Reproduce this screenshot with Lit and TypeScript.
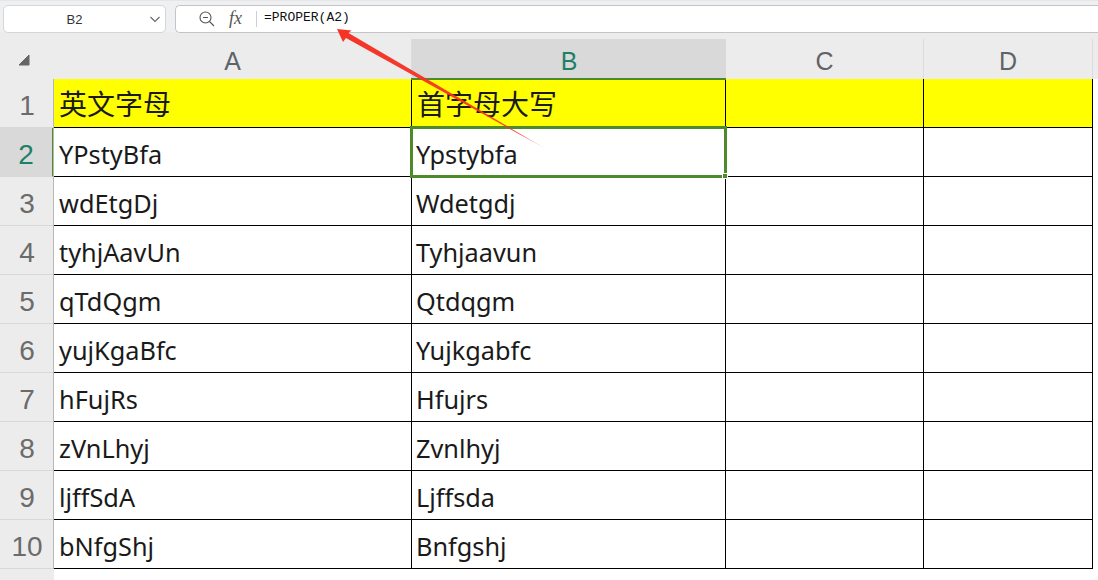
import { LitElement, html, css, svg } from "lit";
import { customElement } from "lit/decorators.js";

const ROWS: [string, string][] = [
  ["英文字母", "首字母大写"],
  ["YPstyBfa", "Ypstybfa"],
  ["wdEtgDj", "Wdetgdj"],
  ["tyhjAavUn", "Tyhjaavun"],
  ["qTdQgm", "Qtdqgm"],
  ["yujKgaBfc", "Yujkgabfc"],
  ["hFujRs", "Hfujrs"],
  ["zVnLhyj", "Zvnlhyj"],
  ["ljffSdA", "Ljffsda"],
  ["bNfgShj", "Bnfgshj"],
];

@customElement("app-root")
export class AppRoot extends LitElement {
  static styles = css`
    :host {
      display: block;
      width: 1098px;
      height: 580px;
      overflow: hidden;
      position: relative;
      background: #ececec;
      font-family: "Liberation Sans", "Noto Sans CJK SC", sans-serif;
    }
    .toolbar {
      height: 32px;
      box-sizing: border-box;
      padding: 4px 0 0 3px;
      display: flex;
      gap: 9px;
      background: #eef0f2;
      border-top: 1px solid #e4e6e8;
    }
    .namebox, .formula {
      height: 28px;
      box-sizing: border-box;
      background: #fff;
      border: 1px solid #d6d6d6;
      border-radius: 5px;
      display: flex;
      align-items: center;
    }
    .namebox {
      width: 163px;
      font-size: 13px;
      color: #333;
      padding-right: 4px;
    }
    .namebox span { flex: 1; text-align: center; padding-right: 4px; }
    .formula {
      flex: 1;
      border-right: none;
      border-radius: 5px 0 0 5px;
      border-color: #c4c4c4;
    }
    .fx-icons { display: flex; align-items: center; margin-left: 23px; gap: 14px; }
    .fx {
      font: italic 18px "Liberation Serif", serif;
      color: #555;
      width: 17px;
      margin-top: -2px;
    }
    .sep { width: 1px; height: 16px; background: #cfcfcf; margin-left: 10px; }
    .ftext {
      font: 13px "Liberation Mono", monospace;
      margin-left: 7px;
      margin-top: -3px;
      color: #111;
    }
    .grid {
      display: grid;
      grid-template-columns: 54px 358px 314px 198px 169px 5px;
      grid-template-rows: 40px repeat(10, 49px) 12px;
      margin-top: 7px;
    }
    .corner { display: flex; align-items: center; justify-content: center; padding-top: 2px; padding-right: 6px;}
    .ch {
      display: flex;
      align-items: center;
      justify-content: center;
      font-size: 25px;
      color: #5f6368;
      border-right: 1px solid #dcdcdc;
      box-sizing: border-box;
      padding-top: 4px;
    }
    .ch.sel { background: #d9d9d9; color: #1e8068; border-right: none; }
    .rh {
      display: flex;
      align-items: center;
      justify-content: center;
      font-size: 28px;
      color: #6b6b6b;
      border-bottom: 1px solid #d8d8d8;
      box-sizing: border-box;
      padding-top: 5px;
    }
    .rh.sel { background: #d9d9d9; color: #1e8068; border-right: 2px solid #4f8a2a; }
    .rh.last {
      border: none;
      padding-top: 7px;
      align-items: flex-start;
      height: 40px;
    }
    .cell {
      box-sizing: border-box;
      background: #fff;
      border-right: 1px solid #000;
      border-bottom: 1px solid #000;
      font: 25.3px "Noto Sans", "Noto Sans CJK SC", sans-serif;
      color: #1a1a1a;
      display: flex;
      align-items: center;
      padding: 4px 0 0 5px;
      white-space: nowrap;
    }
    .cell.colb { padding-left: 4px; }
    .cell.head { background: #ff0; }
    .cell.first { box-shadow: -1px 0 0 #b8b8b8; }
    .cell.cjk { font: 28px "Noto Sans CJK SC", sans-serif; padding: 0 0 0 5px; }
    .pad { background: #fff; }
    .pad.top { background: #ececec; }
    .cell.active { position: relative; }
    .cell.active::after {
      content: "";
      position: absolute;
      left: -2px;
      top: -2px;
      right: -2px;
      bottom: -2px;
      border: 3px solid #4f8a2a;
      pointer-events: none;
    }
    .cell.b1 { position: relative; }
    .cell.b1::before {
      content: "";
      position: absolute;
      left: -1px;
      top: -1px;
      right: -1px;
      height: 2px;
      background: #4f8a2a;
    }
    .handle {
      position: absolute;
      right: -3px;
      bottom: -3px;
      width: 6px;
      height: 6px;
      background: #4f8a2a;
      border: 1px solid #fff;
      box-sizing: border-box;
      z-index: 2;
    }
    .arrow {
      position: absolute;
      left: 0;
      top: 0;
      pointer-events: none;
    }
    .below { grid-column: 2 / 7; background: #fff; }
  `;

  render() {
    return html`
      <div class="toolbar">
        <div class="namebox">
          <span>B2</span>
          <svg width="12" height="12" viewBox="0 0 12 12" fill="none" stroke="#666" stroke-width="1.1"><path d="M1.5 4 L6 8.5 L10.5 4"/></svg>
        </div>
        <div class="formula">
          <div class="fx-icons">
            <svg width="16" height="16" viewBox="0 0 16 16" fill="none" stroke="#555" stroke-width="1.1">
              <circle cx="6.5" cy="6.5" r="5.5"/><path d="M4 6.5 H9 M10.5 10.5 L15 15"/>
            </svg>
            <span class="fx">fx</span>
          </div>
          <div class="sep"></div>
          <div class="ftext">=PROPER(A2)</div>
        </div>
      </div>
      <div class="grid">
        <div class="corner">
          <svg width="12" height="12" viewBox="0 0 12 12"><path d="M11 1 V11 H1 Z" fill="#666" stroke="#666" stroke-linejoin="round"/></svg>
        </div>
        <div class="ch">A</div>
        <div class="ch sel">B</div>
        <div class="ch">C</div>
        <div class="ch">D</div>
        <div class="pad top"></div>
        ${ROWS.map((r, i) => html`
          <div class="rh ${i === 1 ? "sel" : ""}">${i + 1}</div>
          <div class="cell first ${i === 0 ? "head cjk" : ""}">${r[0]}</div>
          <div class="cell colb ${i === 0 ? "head cjk b1" : ""} ${i === 1 ? "active" : ""}">${r[1]}${i === 1 ? html`<i class="handle"></i>` : ""}</div>
          <div class="cell ${i === 0 ? "head" : ""}"></div>
          <div class="cell ${i === 0 ? "head" : ""}"></div>
          <div class="pad"></div>
        `)}
        <div class="rh last">11</div>
        <div class="below"></div>
      </div>
      <svg class="arrow" width="1098" height="580" viewBox="0 0 1098 580">
        ${svg`<defs><linearGradient id="g" gradientUnits="userSpaceOnUse" x1="546" y1="149" x2="337" y2="29">
          <stop offset="0" stop-color="#f53325" stop-opacity="0.25"/><stop offset="0.12" stop-color="#f53325" stop-opacity="0.9"/><stop offset="1" stop-color="#f53325"/></linearGradient></defs>
          <path d="M337 29 L351.5 30.5 L348.5 33 L546 149 L346 38 L343 42 Z" fill="url(#g)"/>`}
      </svg>
    `;
  }
}
